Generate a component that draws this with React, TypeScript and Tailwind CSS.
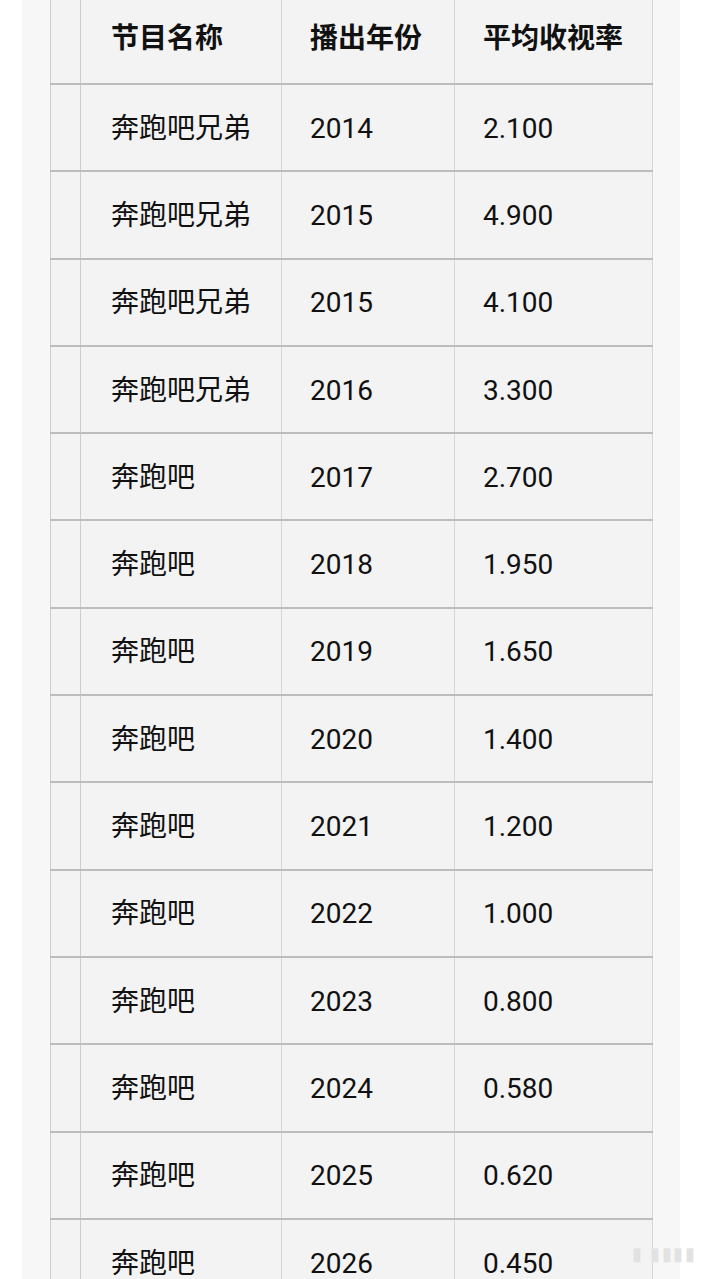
const rows: [string, string, string][] = [
  ['奔跑吧兄弟', '2014', '2.100'],
  ['奔跑吧兄弟', '2015', '4.900'],
  ['奔跑吧兄弟', '2015', '4.100'],
  ['奔跑吧兄弟', '2016', '3.300'],
  ['奔跑吧', '2017', '2.700'],
  ['奔跑吧', '2018', '1.950'],
  ['奔跑吧', '2019', '1.650'],
  ['奔跑吧', '2020', '1.400'],
  ['奔跑吧', '2021', '1.200'],
  ['奔跑吧', '2022', '1.000'],
  ['奔跑吧', '2023', '0.800'],
  ['奔跑吧', '2024', '0.580'],
  ['奔跑吧', '2025', '0.620'],
  ['奔跑吧', '2026', '0.450'],
];

const font = { fontFamily: '"Roboto", "Noto Sans CJK SC", sans-serif' };

function Row({ cells, head }: { cells: string[]; head?: boolean }) {
  return (
    <div
      className={`grid grid-cols-[31px_201px_173px_198px] border-b-2 border-[#bdbdbd] ${
        head ? 'h-[85px]' : 'h-[87.3px]'
      }`}
    >
      <div className="border-l border-r border-[#cdcdcd]" />
      {cells.map((c, i) => (
        <div
          key={i}
          className={`flex items-center border-r border-[#d6d6d6] text-[28px] text-[#111111] ${
            i === 0 ? 'pl-[30px]' : 'pl-[28px]'
          } ${head ? 'font-bold pb-[6px]' : 'pt-[2px]'}`}
        >
          {c}
        </div>
      ))}
    </div>
  );
}

export default function App() {
  return (
    <div className="w-[705px] h-[1279px] overflow-hidden bg-white relative" style={font}>
      <div className="ml-[22px] w-[658px] h-full bg-[#f7f7f7] pl-[28px]">
        <div className="w-[603px] bg-[#f3f3f3]">
          <Row cells={['节目名称', '播出年份', '平均收视率']} head />
          {rows.map((r, i) => (
            <Row key={i} cells={r} />
          ))}
        </div>
      </div>
      {/* faint watermark */}
      <div className="absolute right-[8px] bottom-[12px] text-[18px] text-[#e2e2e2] tracking-widest">
        ▮ ▮▮▮▮
      </div>
    </div>
  );
}
